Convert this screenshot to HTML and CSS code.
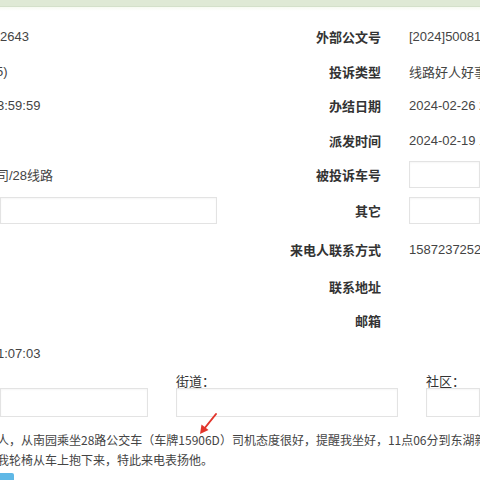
FILE: index.html
```html
<!DOCTYPE html>
<html lang="zh-CN">
<head>
<meta charset="utf-8">
<title>投诉详情</title>
<link rel="stylesheet" href="styles.css">
</head>
<body>
<div class="topbar"></div>
<div class="fade"></div>
<div class="form">
  <div class="lv">2643</div><div class="lb">外部公文号</div><div class="rv">[2024]5008180</div>
  <div class="lv"><span class="cut">5)</span></div><div class="lb">投诉类型</div><div class="rv">线路好人好事表扬</div>
  <div class="lv"><span class="cut2">3:59:59</span></div><div class="lb">办结日期</div><div class="rv">2024-02-26 23:59:59</div>
  <div class="lv"></div><div class="lb">派发时间</div><div class="rv">2024-02-19 11:07:03</div>
  <div class="lv"><span class="cut">司/28线路</span></div><div class="lb">被投诉车号</div><div class="rv"><div class="box wide"></div></div>
  <div class="lv"><div class="box left"></div></div><div class="lb">其它</div><div class="rv"><div class="box wide"></div></div>
  <div class="lv"></div><div class="lb">来电人联系方式</div><div class="rv">15872372523</div>
  <div class="lv"></div><div class="lb">联系地址</div><div class="rv"></div>
  <div class="lv"></div><div class="lb">邮箱</div><div class="rv"></div>
  <div class="lv"><span class="cut2">1:07:03</span></div><div class="lb"></div><div class="rv"></div>
</div>
<div class="area">
  <div class="col"><div class="alabel">&nbsp;</div><div class="box tall"></div></div>
  <div class="col"><div class="alabel">街道：</div><div class="box tall"></div></div>
  <div class="col"><div class="alabel">社区：</div><div class="box tall"></div></div>
</div>
<div class="desc">
  <div class="line">人，从南园乘坐28路公交车（车牌15906D）司机态度很好，提醒我坐好，11点06分到东湖新村站，司机</div>
  <div class="line">我轮椅从车上抱下来，特此来电表扬他。</div>
</div>
<div class="btn"></div>
<svg class="arrow" width="30" height="30" viewBox="0 0 30 30">
  <line x1="24" y1="2" x2="12" y2="17" stroke="#e2352c" stroke-width="2" stroke-linecap="round"/>
  <polygon points="8,22 9.5,12.5 16.5,18" fill="#e2352c"/>
</svg>
</body>
</html>
```
FILE: styles.css
```css
html, body {
  margin: 0;
  padding: 0;
  background: #ffffff;
  overflow: hidden;
  width: 480px;
  height: 480px;
  position: relative;
  font-family: "Liberation Sans", "Noto Sans CJK SC", sans-serif;
  font-size: 13px;
  color: #444;
}
.topbar {
  height: 6px;
  background: #dfe9d5;
  border-bottom: 1px solid #d4e0ca;
}
.fade {
  height: 4px;
  background: linear-gradient(#f7faf1, #ffffff);
}
.form {
  display: grid;
  grid-template-columns: 240px 141px 1fr;
  grid-template-rows: 34.5px 34.5px 34.5px 34.5px 34px 38px 40px 34px 34px 32px;
  padding-top: 8.5px;
}
.lv, .lb, .rv {
  display: flex;
  align-items: center;
  white-space: nowrap;
  overflow: hidden;
}
.lb {
  justify-content: flex-end;
  font-weight: bold;
  color: #333;
  font-family: "Noto Sans CJK SC", sans-serif;
}
.rv {
  padding-left: 28px;
}
.cut { margin-left: -4px; }
.cut2 { margin-left: -3px; }
.box {
  height: 27px;
  box-sizing: border-box;
  border: 1px solid #e3e3e3;
  box-shadow: inset 0 1px 2px rgba(0,0,0,0.04);
  background: #fff;
}
.box.wide { width: 100%; }
.box.left { width: 217px; }
.area {
  display: grid;
  grid-template-columns: 148px 222px 1fr;
  column-gap: 28px;
  margin-top: 4px;
}
.col {
  display: flex;
  flex-direction: column;
}
.alabel {
  height: 14px;
  line-height: 14px;
  color: #333;
  font-size: 13px;
  font-family: "Noto Sans CJK SC", sans-serif;
  margin-bottom: 0;
}
.box.tall { height: 29px; }
.desc {
  margin-top: 13px;
  margin-left: -3px;
  font-size: 12px;
  color: #444;
  font-family: "Noto Sans CJK SC", sans-serif;
}
.line {
  height: 20px;
  line-height: 20px;
  white-space: nowrap;
}
.btn {
  margin-top: 3px;
  width: 14px;
  height: 10px;
  background: #5fb8e6;
  border-top-right-radius: 2px;
}
.arrow {
  position: absolute;
  left: 192px;
  top: 412px;
}
```
